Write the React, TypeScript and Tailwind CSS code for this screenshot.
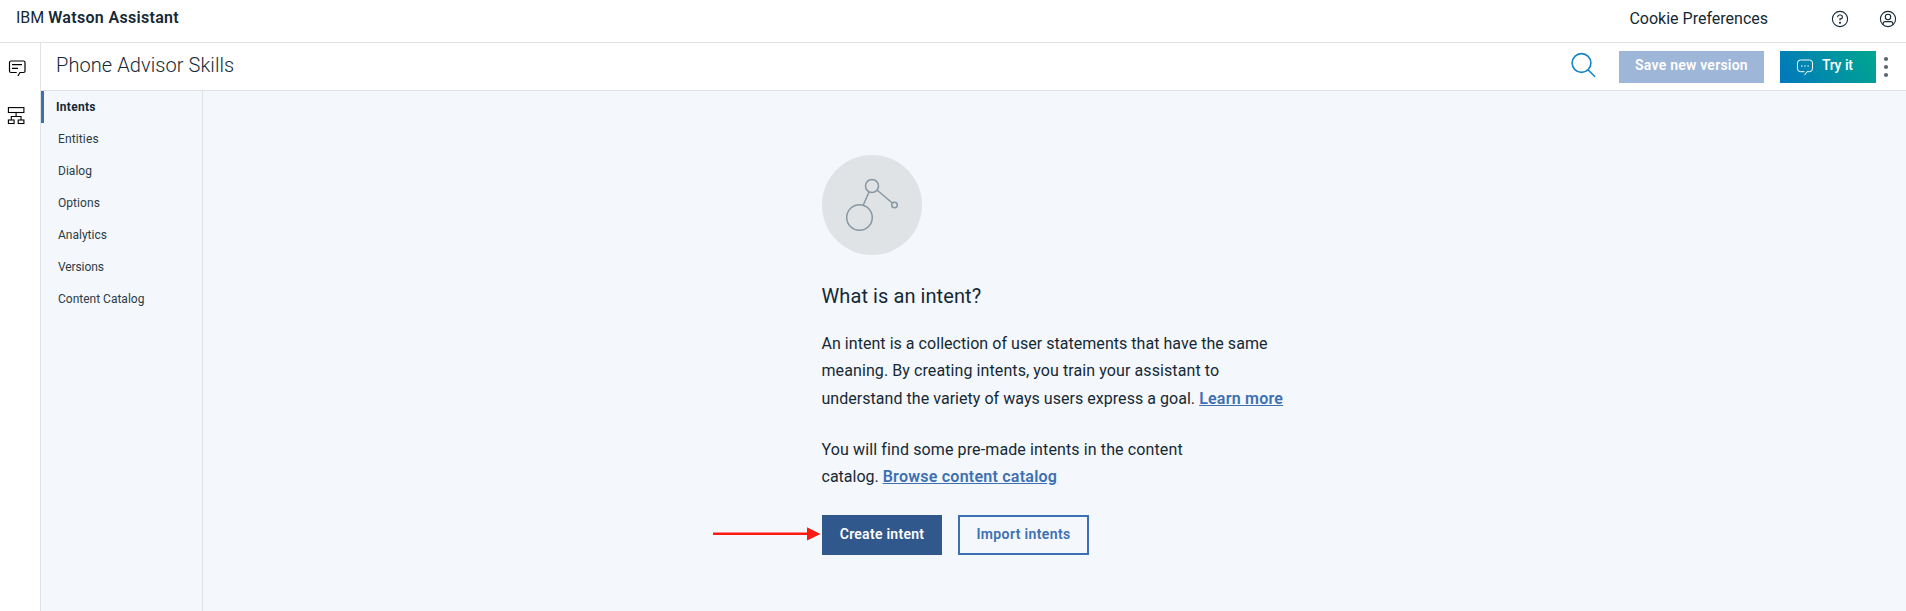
import React from "react";

const navItems: { label: string; ls: string }[] = [
  { label: "Entities", ls: "tracking-[0.13px]" },
  { label: "Dialog", ls: "tracking-[0.03px]" },
  { label: "Options", ls: "tracking-[0.06px]" },
  { label: "Analytics", ls: "tracking-[0px]" },
  { label: "Versions", ls: "tracking-[-0.1px]" },
  { label: "Content Catalog", ls: "tracking-[0px]" },
];

export default function App() {
  return (
    <div className="relative flex h-[611px] w-[1906px] flex-col overflow-hidden bg-white font-['Roboto',sans-serif] text-[#152935]">
      <header className="flex h-[43px] shrink-0 items-start border-b border-[#dfe3e6] pl-4">
        <div className="mt-[6px] flex-1 text-[16px] leading-6 whitespace-nowrap">
          IBM <span className="font-semibold tracking-[0.31px]">Watson Assistant</span>
        </div>
        <div className="mt-[7px] text-[16px] leading-6 whitespace-nowrap">Cookie Preferences</div>
        <svg className="mt-[10px] ml-[63px] h-[18px] w-[18px]" viewBox="0 0 18 18" fill="none" stroke="#152935" strokeWidth="1.1">
          <circle cx="9" cy="9" r="7.6" />
          <path d="M6.7 7.200V6.900a1.900 1.900 0 0 1 1.900-1.900h.8a1.900 1.900 0 0 1 0 3.900H9v1.700" />
          <circle cx="9" cy="12.800" r=".5" fill="#152935" />
        </svg>
        <svg className="mt-[10px] mr-[9px] ml-[30px] h-[18px] w-[18px]" viewBox="0 0 18 18" fill="none" stroke="#152935" strokeWidth="1.1">
          <circle cx="9" cy="9" r="7.6" />
          <circle cx="9" cy="7" r="2.7" />
          <path d="M4.200 14.800v-1.200a2 2 0 0 1 2-2h5.600a2 2 0 0 1 2 2v1.200" />
        </svg>
      </header>

      <div className="flex flex-1">
        <aside className="flex w-[41px] shrink-0 flex-col border-r border-[#dfe3e6] pt-[16px] pl-[7px]">
          <svg className="h-[20px] w-[20px]" viewBox="0 0 20 20" fill="none" stroke="#000" strokeWidth="1.2">
            <path d="M10.900 17l2.100-3.500H16.500a1.500 1.500 0 0 0 1.500-1.500V3.500a1.500 1.500 0 0 0-1.500-1.500H4A1.500 1.500 0 0 0 2.500 3.500V12A1.500 1.500 0 0 0 4 13.500h5.700" />
            <path d="M5 5.600h10M5 9.300h6" />
          </svg>
          <svg className="mt-[27px] h-[20px] w-[20px]" viewBox="0 0 20 20" fill="none" stroke="#000" strokeWidth="1.1">
            <rect x="1.400" y="1.600" width="15.500" height="4.900" />
            <rect x="1.400" y="14" width="5.700" height="3.500" />
            <rect x="11.200" y="14" width="5.700" height="3.500" />
            <path d="M9.100 6.500v4M4.300 14v-3.500H14V14" />
          </svg>
        </aside>

        <div className="flex flex-1 flex-col">
          <div className="flex h-[48px] shrink-0 items-start border-b border-[#dfe3e6] pl-[15px]">
            <h1 className="mt-[7px] flex-1 text-[20px] leading-[30px] font-light tracking-[0.08px] whitespace-nowrap">Phone Advisor Skills</h1>
            <svg className="mt-[9px] h-[27px] w-[27px]" viewBox="0 0 27 27" fill="none" stroke="#1585c6" strokeWidth="1.6">
              <circle cx="11.500" cy="11" r="9.400" />
              <path d="M18 17.800l7 7" />
            </svg>
            <button className="mt-2 ml-[22px] h-8 w-[145px] bg-[#9eb6d8] pb-1 text-[14px] font-semibold tracking-[0.23px] whitespace-nowrap text-white">
              Save new version
            </button>
            <button className="mt-2 ml-4 flex h-8 w-24 items-center bg-linear-[60deg] from-[#0277bd] to-[#00a78f] pl-[16px] text-[14px] font-medium whitespace-nowrap text-white">
              <svg className="h-[18px] w-[18px]" viewBox="0 0 18 18" fill="none" stroke="#fff" strokeWidth="1">
                <path d="M8.600 17.200l2.400-3.500H13.500a3 3 0 0 0 3-3V5a3 3 0 0 0-3-3H4.500a3 3 0 0 0-3 3v5.700a3 3 0 0 0 3 3h4" />
                <path d="M5 8h1.500M8.200 8h1.500M11.400 8h1.500" />
              </svg>
              <span className="mb-1 ml-2 tracking-[-0.35px] [word-spacing:1px]">Try it</span>
            </button>
            <svg className="mt-[13px] mr-[17px] ml-[7px] h-[22px] w-[6px]" viewBox="0 0 6 22" fill="#5a6872">
              <circle cx="3" cy="3" r="2.100" />
              <circle cx="3" cy="11" r="2.100" />
              <circle cx="3" cy="19" r="2.100" />
            </svg>
          </div>

          <div className="flex flex-1 bg-[#f4f7fb]">
            <nav className="flex w-[162px] shrink-0 flex-col border-r border-[#dfe3e6] text-[12px] whitespace-nowrap">
              <div className="h-8 border-l-[3px] border-[#3d70b2] pl-3 leading-8 font-bold tracking-[0.3px]">Intents</div>
              {navItems.map((n) => (
                <div key={n.label} className={`h-8 pl-[17px] leading-8 text-[#2a3c47] ${n.ls}`}>
                  {n.label}
                </div>
              ))}
            </nav>
            <main className="flex flex-1 flex-col items-start pt-[64px] pl-[619px] whitespace-nowrap">
              <svg className="h-[100px] w-[100px]" viewBox="0 0 100 100" fill="none" stroke="#8897a2" strokeWidth="1.500">
                <circle cx="50" cy="50" r="50" fill="#dfe3e6" stroke="none" />
                <circle cx="50" cy="31" r="6.500" />
                <circle cx="37.500" cy="62.500" r="12.800" />
                <circle cx="72.500" cy="50" r="2.800" />
                <path d="M47 37l-5.700 13M55 35l15.300 13" />
              </svg>
              <h2 className="mt-[26px] -ml-[0.5px] text-[20px] leading-[30px] tracking-[0.08px]">What is an intent?</h2>
              <div className="mt-[19px] -ml-[0.5px] text-[16px] leading-[27px]">
                <div className="tracking-[0.04px]">An intent is a collection of user statements that have the same</div>
                <div className="tracking-[0.09px]">meaning. By creating intents, you train your assistant to</div>
                <div className="mt-px tracking-[0.04px]">
                  understand the variety of ways users express a goal.{" "}
                  <a className="font-semibold tracking-[0.23px] text-[#3d70b2] underline">Learn more</a>
                </div>
              </div>
              <div className="mt-[24px] -ml-[0.5px] text-[16px] leading-[27px]">
                <div className="tracking-[0.12px]">You will find some pre-made intents in the content</div>
                <div>
                  catalog. <a className="font-semibold tracking-[0.24px] text-[#3d70b2] underline">Browse content catalog</a>
                </div>
              </div>
              <div className="relative mt-[25px] flex gap-4 text-[14px] font-semibold">
                <svg className="absolute top-[12px] left-[-109px] h-[14px] w-[108px]" viewBox="0 0 108 14" fill="#ff1b12">
                  <path d="M0 5.500h94v2.600H0zM94 .300l13.500 6.600L94 13.500z" />
                </svg>
                <button className="h-10 w-[120px] bg-[#30588c] pb-0.5 tracking-[0.27px] text-white">Create intent</button>
                <button className="h-10 w-[131px] border-2 border-[#3d70b2] pb-0.5 tracking-[0.37px] text-[#3d70b2]">Import intents</button>
              </div>
            </main>
          </div>
        </div>
      </div>
    </div>
  );
}
